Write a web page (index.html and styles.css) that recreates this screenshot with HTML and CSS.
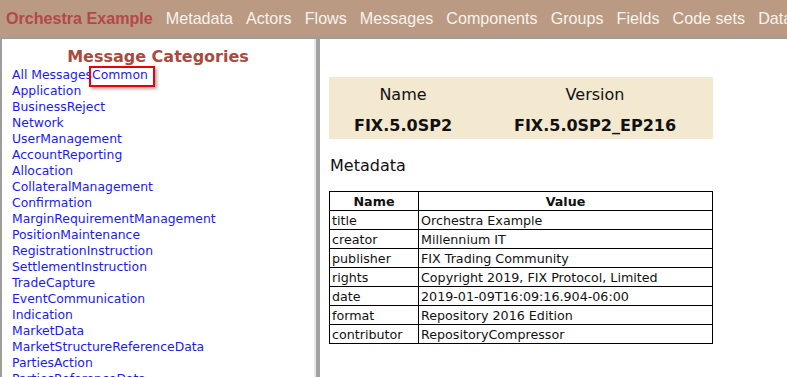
FILE: index.html
```html
<!DOCTYPE html>
<html lang="en">
<head>
  <meta charset="UTF-8" />
  <title>Orchestra Example</title>
  <link rel="stylesheet" href="styles.css">
</head>
<body>

  <header class="topbar">
    <span class="brand">Orchestra Example</span>
    <a href="#">Metadata</a>
    <a href="#">Actors</a>
    <a href="#">Flows</a>
    <a href="#">Messages</a>
    <a href="#">Components</a>
    <a href="#">Groups</a>
    <a href="#">Fields</a>
    <a href="#">Code sets</a>
    <a href="#">Datatypes</a>
  </header>

  <div class="layout">
    <nav class="sidebar">
      <h3>Message Categories</h3>
      <ul class="cats">
        <li><a href="#">All Messages</a><a href="#" class="marked">Common</a></li>
        <li><a href="#">Application</a></li>
        <li><a href="#">BusinessReject</a></li>
        <li><a href="#">Network</a></li>
        <li><a href="#">UserManagement</a></li>
        <li><a href="#">AccountReporting</a></li>
        <li><a href="#">Allocation</a></li>
        <li><a href="#">CollateralManagement</a></li>
        <li><a href="#">Confirmation</a></li>
        <li><a href="#">MarginRequirementManagement</a></li>
        <li><a href="#">PositionMaintenance</a></li>
        <li><a href="#">RegistrationInstruction</a></li>
        <li><a href="#">SettlementInstruction</a></li>
        <li><a href="#">TradeCapture</a></li>
        <li><a href="#">EventCommunication</a></li>
        <li><a href="#">Indication</a></li>
        <li><a href="#">MarketData</a></li>
        <li><a href="#">MarketStructureReferenceData</a></li>
        <li><a href="#">PartiesAction</a></li>
        <li><a href="#">PartiesReferenceData</a></li>
      </ul>
    </nav>
    <div class="splitter"></div>

    <main class="content">
      <table class="version">
        <colgroup><col class="c1"><col class="c2"></colgroup>
        <tr><th>Name</th><th>Version</th></tr>
        <tr><td>FIX.5.0SP2</td><td>FIX.5.0SP2_EP216</td></tr>
      </table>

      <h2>Metadata</h2>

      <table class="meta">
        <colgroup><col class="key"><col></colgroup>
        <tr><th>Name</th><th>Value</th></tr>
        <tr><td>title</td><td>Orchestra Example</td></tr>
        <tr><td>creator</td><td>Millennium IT</td></tr>
        <tr><td>publisher</td><td>FIX Trading Community</td></tr>
        <tr><td>rights</td><td>Copyright 2019, FIX Protocol, Limited</td></tr>
        <tr><td>date</td><td>2019-01-09T16:09:16.904-06:00</td></tr>
        <tr><td>format</td><td>Repository 2016 Edition</td></tr>
        <tr><td>contributor</td><td>RepositoryCompressor</td></tr>
      </table>
    </main>
  </div>

</body>
</html>
```

FILE: styles.css
```css
:root {
  --bar: #ba9a83;
  --brand: #b4474b;
  --frame: #9d9d9d;
  --beige: #f3e8d0;
  --link: #1a1aee;
}

body {
  margin: 0;
  height: 100vh;
  overflow: hidden;
  background: var(--frame);
  font-family: "DejaVu Sans", Verdana, sans-serif;
}

/* Kopfzeile */
.topbar {
  height: 37px;
  background: var(--bar);
  border-bottom: 2px solid var(--frame);
  display: flex;
  align-items: center;
  gap: 13.1px;
  padding-left: 6px;
  white-space: nowrap;
  overflow: hidden;
  font-family: "Liberation Sans", Arial, sans-serif;
  font-size: 16.1px;
}

.topbar a {
  color: #f7f3ee;
  text-decoration: none;
}

.brand {
  color: var(--brand);
  font-weight: 700;
}

.layout {
  display: flex;
  height: calc(100vh - 39px);
}

/* Linke Spalte */
.sidebar {
  width: 312px;
  margin-left: 2px;
  background: #fff;
  border-right: 2px solid #e9e9e9;
  overflow: hidden;
}

.sidebar h3 {
  margin: 8px 0 0;
  text-align: center;
  font-size: 16px;
  line-height: 20px;
  color: #a84b3f;
}

.cats {
  list-style: none;
  margin: 0;
  padding: 0 0 0 10px;
  font-size: 12.4px;
  line-height: 16px;
}

.cats a {
  color: var(--link);
  text-decoration: none;
}

.marked {
  position: relative;
}

.marked::after {
  content: '';
  position: absolute;
  left: -3px;
  top: -1px;
  right: -7px;
  bottom: -5px;
  border: 2px solid #e8000b;
  box-shadow: 2px 2px 3px rgba(0, 0, 0, 0.35);
}

.splitter {
  width: 4px;
  background: #a2a2a2;
}

/* Rechte Seite */
.content {
  flex: 1;
  background: #fff;
  padding: 40px 0 0 9px;
}

.version {
  width: 384px;
  table-layout: fixed;
  background: var(--beige);
  border-collapse: collapse;
  font-size: 16px;
  margin-top: -2px;
}

.version .c1 {
  width: 148px;
}

.version th,
.version td {
  height: 31px;
  padding: 4px 0 0;
  box-sizing: border-box;
  text-align: center;
  color: #111;
}

.version th {
  font-weight: 400;
}

.version td {
  font-weight: 700;
  padding-top: 3px;
}

.content h2 {
  margin: 16px 0 0 1px;
  font-size: 16px;
  font-weight: 400;
  line-height: 22px;
  color: #111;
}

.meta {
  margin-top: 14px;
  width: 384px;
  table-layout: fixed;
  border-collapse: collapse;
  font-size: 12.7px;
}

.meta .key {
  width: 89px;
}

.meta th,
.meta td {
  border: 1px solid #000;
  height: 18px;
  padding: 0 2px;
  line-height: 17px;
  color: #111;
  text-align: left;
  white-space: nowrap;
}

.meta th {
  text-align: center;
  font-weight: 700;
}
```
